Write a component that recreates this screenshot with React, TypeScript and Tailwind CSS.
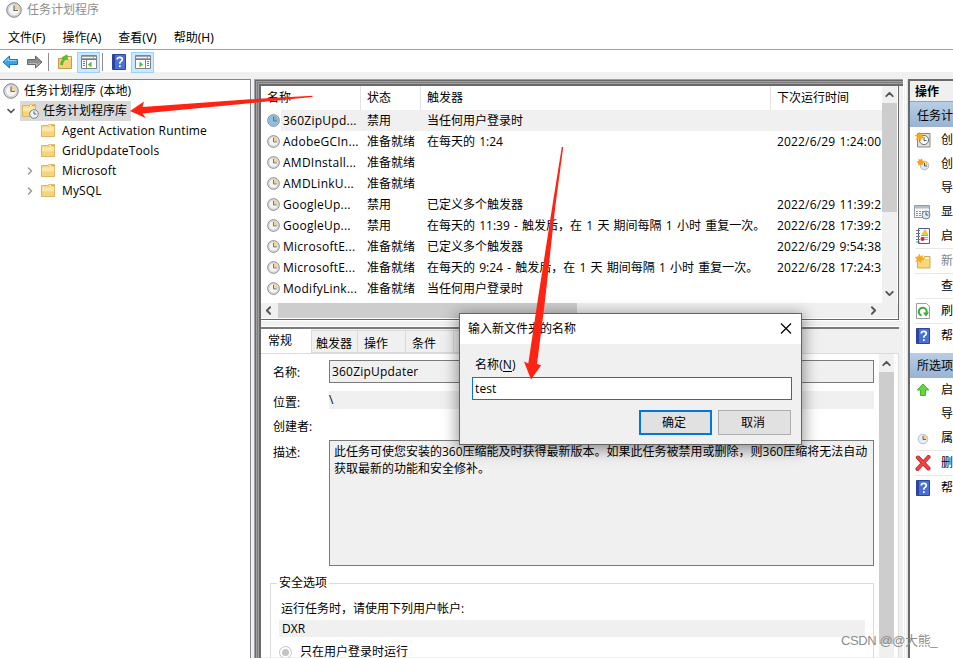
import type { ReactNode } from "react";
import { ChevronDown, ChevronLeft, ChevronRight, ChevronUp } from "lucide-react";
import clsx from "clsx";

type Task = { name: string; state: string; trigger: string; next: string };

const tasks: Task[] = [
  { name: "360ZipUpd...", state: "禁用", trigger: "当任何用户登录时", next: "" },
  { name: "AdobeGCIn...", state: "准备就绪", trigger: "在每天的 1:24", next: "2022/6/29 1:24:00" },
  { name: "AMDInstall...", state: "准备就绪", trigger: "", next: "" },
  { name: "AMDLinkU...", state: "准备就绪", trigger: "", next: "" },
  { name: "GoogleUp...", state: "禁用", trigger: "已定义多个触发器", next: "2022/6/29 11:39:2" },
  { name: "GoogleUp...", state: "禁用", trigger: "在每天的 11:39 - 触发后，在 1 天 期间每隔 1 小时 重复一次。", next: "2022/6/28 17:39:2" },
  { name: "MicrosoftE...", state: "准备就绪", trigger: "已定义多个触发器", next: "2022/6/29 9:54:38" },
  { name: "MicrosoftE...", state: "准备就绪", trigger: "在每天的 9:24 - 触发后，在 1 天 期间每隔 1 小时 重复一次。", next: "2022/6/28 17:24:3" },
  { name: "ModifyLink...", state: "准备就绪", trigger: "当任何用户登录时", next: "" },
];

const Clock = ({ size, blue = false }: { size: number; blue?: boolean }) => (
  <svg width={size} height={size} viewBox="0 0 16 16" className="shrink-0">
    <circle cx="8" cy="8" r="7.3" fill={blue ? "#a9cbe4" : "#d3d5d7"} stroke={blue ? "#5f8dab" : "#85878a"} />
    <circle cx="8" cy="8" r="5.5" fill={blue ? "#94bfdf" : "#f3f4f5"} stroke={blue ? "#7ba8c7" : "#c9cccf"} strokeWidth="0.6" />
    <path d="M8 8V2.6A5.4 5.4 0 0 1 13.4 8z" fill={blue ? "#8eb0b4" : "#f2d595"} />
    <path d="M8 3.5V8.5H12" fill="none" stroke={blue ? "#4c7592" : "#6c727a"} strokeWidth="1.2" />
  </svg>
);

// small clock used for the properties action
const PropertiesClock = () => (
  <svg width="12" height="12" viewBox="0 0 12 12" className="mt-0.5">
    <circle cx="6" cy="6" r="4.8" fill="#e6eef5" stroke="#b3c0cc" />
    <path d="M6 6V1.8A4.2 4.2 0 0 1 10.2 6z" fill="#f5cf87" />
    <path d="M6 3v3.5h3" fill="none" stroke="#56697c" />
  </svg>
);

const Folder = ({ clock = false }: { clock?: boolean }) => (
  <svg width="17" height="16" viewBox="0 0 17 16" className="shrink-0">
    <path d="M.5 2.5H7l1-1h5.500v12H.5z" fill="#f6d98c" stroke="#dcb660" />
    <path d="M7.5 1.5H13v2H7.5z" fill="#fff6da" stroke="#dcb660" strokeWidth=".6" />
    <path d="M10 2h3v1h-3z" fill="#8fb4d9" />
    <path d="M1 4.5h6.500l1-1H13v5H1z" fill="#fce7a8" />
    <path d="M1 8.5h12V13H1z" fill="#f5d47c" />
    {clock && (
      <>
        <circle cx="12" cy="11" r="4.3" fill="#edf3f8" stroke="#77818a" />
        <path d="M12 8.3V11h2.3" fill="none" stroke="#4e6070" />
      </>
    )}
  </svg>
);

const Help = () => (
  <svg width="14" height="16" viewBox="0 0 14 16" className="shrink-0">
    <path d="M.5.5h13v15H.5z" fill="#4a70d6" stroke="#2b449c" />
    <path d="M1 1h2v14H1z" fill="#2a449f" />
    <path d="M5.2 5.5Q5.3 3.3 7.8 3.3T10.3 5.4Q10.3 6.6 9 7.4T7.8 9.7" fill="none" stroke="#fff" strokeWidth="1.7" />
    <path d="M7 11.2h1.7V13H7z" fill="#fff" />
  </svg>
);

const BlueArrow = ({ right = false }: { right?: boolean }) => (
  <svg width="17" height="14" viewBox="0 0 17 14" className={clsx("shrink-0", right && "rotate-180")}>
    <path d="M1 7l6.5-6v3.5h8v5h-8V13z" fill={right ? "#8e8e8e" : "#37a5e8"} stroke={right ? "#686868" : "#1976b8"} strokeLinejoin="round" />
    <path d="M3 6.5l3.5-3v2h8" fill="none" stroke={right ? "#b9b9b9" : "#8ed6fa"} />
  </svg>
);

const PaneIcon = ({ right = false }: { right?: boolean }) => (
  <svg width="16" height="14" viewBox="0 0 16 14" className="shrink-0">
    <path d="M.5.5h15v13H.5z" fill="#fff" stroke="#81858a" />
    <path d="M1 1h14v3H1z" fill="#a1a5aa" />
    <path d="M1 2.5h11" stroke="#eef0f2" />
    <path d="M13 2.5h2" stroke="#fff" />
    <path d="M1 4.5h14" stroke="#777b80" />
    <path d={right ? "M10.5 5v8.5" : "M5.5 5v8.5"} stroke="#81858a" />
    <path d={right ? "M12 6.5h2M12 8.5h2M12 10.5h2" : "M2 6.5h2M2 8.5h2M2 10.5h2"} stroke="#647fa8" />
    <path d={right ? "M4.5 6.5L8 9.5l-3.5 3z" : "M10.5 6.5L7 9.5l3.5 3z"} fill="#4eb832" />
  </svg>
);

const UpFolder = () => (
  <svg width="15" height="16" viewBox="0 0 15 16">
    <path d="M.5 4.5H6l1.5-2h6v12H.5z" fill="#f5d27a" stroke="#c69a43" />
    <path d="M9 3h4v2H9z" fill="#f8e7b6" />
    <path d="M2.5 10.5c.3-3 1.5-5 3-5.500L4 3.500 9 .8 9.500 6 8 5C6 6 5 8 4.500 11z" fill="#53c52c" stroke="#3b9b22" strokeWidth=".5" />
  </svg>
);

const Spark = () => (
  <path d="M4.5 0l1 2.7L8 1.5 7 4l2.2 1.5-2.6.8L5.5 9 4 6.5 1 7.8 2.3 5 0 3.2l3-.4z" fill="#f7a91c" stroke="#f7a91c" strokeWidth=".5" />
);

const NewClock = ({ boxed = false }: { boxed?: boolean }) => (
  <svg width="16" height="16" viewBox="0 0 16 16">
    {boxed ? (
      <>
        <path d="M2.5 1.5H15V15H2.5z" fill="#e4e1dd" stroke="#8d8680" />
        <circle cx="9" cy="8" r="4.6" fill="#f5f7f9" stroke="#6e747b" />
        <path d="M9 5v3.5h2.5" fill="none" stroke="#486078" />
        <Spark />
      </>
    ) : (
      <>
        <circle cx="9.5" cy="9.5" r="4.3" fill="#dfe9f1" stroke="#a3b6c4" />
        <path d="M9.5 9.5V5.5a4 4 0 0 1 4 4z" fill="#f5cf87" />
        <path d="M9.5 7v3H12" fill="none" stroke="#486078" />
        <path d="M3.5 2.5l1.5 1.2L7 2.5l.5 2L10 6 8 7.200 7.200 9.500 5 8.500l-2 1 .3-2.300-1.800-1.500 2-.7z" fill="#f7a01c" />
      </>
    )}
  </svg>
);

const RunningTasks = () => (
  <svg width="17" height="15" viewBox="0 0 17 15">
    <path d="M.5.5h15v12H.5z" fill="#f8f9fa" stroke="#949da5" />
    <path d="M1 1h14v2.5H1z" fill="#b5bec6" />
    <path d="M2 6.5h8M2 8.5h6M2 10.5h5" stroke="#8296a8" strokeDasharray="2 1" />
    <circle cx="12" cy="10" r="4" fill="#dceaf1" stroke="#75848e" />
    <path d="M12 7.2V10h2.5" fill="none" stroke="#455e6e" />
  </svg>
);

const History = () => (
  <svg width="14" height="16" viewBox="0 0 14 16">
    <path d="M2.5.5h11v15h-11z" fill="#f8fbff" stroke="#4a6085" />
    <path d="M0 2.5h4M0 5.5h4M0 8.5h4M0 11.5h4M0 14h4" stroke="#777" />
    <path d="M5 7.5h7M5 9.5h7M8 11.5h4" stroke="#8badd5" />
    <path d="M9 1.5l3 5H6z" fill="#f6cb20" stroke="#cf9c12" strokeWidth=".4" />
    <circle cx="6.5" cy="11" r="2" fill="#d92b2b" />
  </svg>
);

const NewFolder = () => (
  <svg width="16" height="15" viewBox="0 0 16 15">
    <path d="M2.5 4.5h6l1-2H15V14H2.5z" fill="#f8d77f" stroke="#d5ab51" />
    <path d="M10 3h4v2h-4z" fill="#fff1c6" />
    <Spark />
  </svg>
);

const Refresh = () => (
  <svg width="14" height="16" viewBox="0 0 14 16">
    <path d="M.5.5h10l3 3v12H.5z" fill="#fff" stroke="#9aa0a6" />
    <path d="M5.5 12.5A4 4 0 1 1 10.5 10" fill="none" stroke="#35ae35" strokeWidth="2" />
    <path d="M7 9.5h6l-3 4z" fill="#35ae35" />
  </svg>
);

const RunArrow = () => (
  <svg width="14" height="14" viewBox="0 0 14 14">
    <path d="M7 1l5.8 6H9.5v5.5h-5V7H1.2z" fill="#63d63b" stroke="#4cb034" strokeLinejoin="round" />
  </svg>
);

const DeleteCross = () => (
  <svg width="16" height="16" viewBox="0 0 16 16">
    <path d="M3 2.5l10.5 11M13.5 2l-11 12" stroke="#b91f23" strokeWidth="4" strokeLinecap="round" />
    <path d="M3 2.5l10.5 11M13.5 2l-11 12" stroke="#ee4247" strokeWidth="2.6" strokeLinecap="round" />
  </svg>
);

const Separator = () => <div className="ml-[5px] h-px bg-[#e8e8e8]" />;

const ActionRow = ({ icon, text, muted = false }: { icon?: ReactNode; text: string; muted?: boolean }) => (
  <div className={clsx("flex h-6 items-center pl-1", muted && "text-[#838383]")}>
    <span className="mr-2.5 flex w-[17px] shrink-0 justify-center">{icon}</span>
    <span className="whitespace-nowrap">{text}</span>
  </div>
);

const TreeItem = ({ text, expandable = false }: { text: string; expandable?: boolean }) => (
  <div className="flex h-5 items-center pl-6">
    <span className="w-4">{expandable && <ChevronRight size={12} className="text-[#9a9a9a]" strokeWidth={3} />}</span>
    <span className="-mt-px ml-px"><Folder /></span>
    <span className="ml-1 tracking-[0.16px]">{text}</span>
  </div>
);

const TaskRow = ({ task, selected }: { task: Task; selected: boolean }) => (
  <div className="flex h-[21px] items-center pl-1.5">
    <Clock size={13} blue={selected} />
    <div className={clsx("ml-px flex h-full flex-1 items-center", selected && "bg-[#f0f0f0]")}>
      <span className="w-[86px] shrink-0 pl-[2px] tracking-[0.25px]">{task.name}</span>
      <span className="w-[60px] shrink-0">{task.state}</span>
      <span className="w-[350px] shrink-0 [word-spacing:1.1px]">{task.trigger}</span>
      <span className="w-[105px] shrink-0 tracking-[0.16px] whitespace-nowrap [word-spacing:0.9px]">{task.next}</span>
    </div>
  </div>
);

const TaskList = () => (
  <div className="flex h-[234px] w-[638px] flex-col border-r border-b border-[#696969] bg-white">
    <div className="flex h-[217px]">
      <div className="w-[621px] overflow-hidden">
        <div className="flex h-6 items-center">
          <div className="flex h-full w-[100px] items-center border-r border-[#e2e2e2] pl-1.5">名称</div>
          <div className="flex h-full w-[60px] items-center border-r border-[#e2e2e2] pl-1.5">状态</div>
          <div className="flex h-full w-[350px] items-center border-r border-[#e2e2e2] pl-1.5">触发器</div>
          <div className="pl-1.5">下次运行时间</div>
        </div>
        {tasks.map((task, i) => (
          <TaskRow key={i} task={task} selected={i === 0} />
        ))}
      </div>
      <div className="flex w-[15px] flex-col items-center bg-[#f0f0f0] text-[#555]">
        <ChevronUp size={13} strokeWidth={3.5} className="my-0.5" />
        <div className="h-[109px] w-full bg-[#cdcdcd]" />
        <ChevronDown size={13} strokeWidth={3.5} className="mt-auto mb-[3px]" />
      </div>
    </div>
    <div className="flex h-[15px] items-center bg-[#f0f0f0] text-[#555]">
      <ChevronLeft size={13} strokeWidth={3.5} className="ml-px mr-[3px]" />
      <div className="h-full w-[299px] bg-[#cdcdcd]" />
      <ChevronRight size={13} strokeWidth={3.5} className="mr-[18px] ml-auto" />
    </div>
  </div>
);

const TaskDetails = () => (
  <div className="flex h-[330px] w-[638px] flex-col border-t-2 border-[#7b7b7b] bg-[#f0f0f0]">
    <div className="flex h-6 shrink-0 items-end">
      <div className="flex h-full w-[50px] items-center bg-white pl-[7px]">常规</div>
      {["触发器", "操作", "条件", ""].map((tab, i) => (
        <div
          key={i}
          className={clsx(
            "flex h-[23px] items-center border-t border-l border-b border-[#d9d9d9] pt-1",
            i === 0 ? "w-[46px] pl-1" : "w-12 pl-1.5"
          )}
        >
          {tab}
        </div>
      ))}
    </div>
    <div className="flex min-h-0 flex-1 border-t border-r border-[#dcdcdc] bg-white">
      <div className="w-[617px] shrink-0 pl-3">
        <div className="mt-1.5 flex h-[23px] items-center">
          <span className="w-14 pt-0.5">名称:</span>
          <div className="flex h-[23px] w-[545px] items-center border border-[#7a7a7a] bg-[#f0f0f0] pl-[2px] tracking-[0.2px]">360ZipUpdater</div>
        </div>
        <div className="mt-2 flex h-[18px] items-center">
          <span className="w-14 pt-1.5">位置:</span>
          <div className="flex h-full w-[545px] items-center bg-[#f0f0f0]">\</div>
        </div>
        <div className="mt-[9px] flex h-[18px] items-center">创建者:</div>
        <div className="mt-1 flex h-[126px]">
          <span className="w-14 pt-1">描述:</span>
          <div className="w-[545px] border border-[#7a7a7a] bg-[#f0f0f0] pt-[2px] pl-1 leading-[17px]">
            <div className="whitespace-nowrap">此任务可使您安装的360压缩能及时获得最新版本。如果此任务被禁用或删除，则360压缩将无法自动</div>
            <div>获取最新的功能和安全修补。</div>
          </div>
        </div>
        <fieldset className="mt-2 -ml-[3px] h-[100px] w-[604px] border border-[#dcdcdc] pl-2">
          <legend className="-ml-0.5 h-[18px] px-0.5 leading-[18px]">安全选项</legend>
          <div className="mt-2 flex h-[18px] items-center pl-[2px]">运行任务时，请使用下列用户帐户:</div>
          <div className="mt-[2px] flex h-[17px] w-[586px] items-center bg-[#f0f0f0] pl-[3px]">DXR</div>
          <div className="mt-[6px] flex h-[18px] items-center">
            <span className="flex size-[13px] items-center justify-center rounded-full border border-[#c4c4c4]">
              <span className="size-[7px] rounded-full bg-[#c4c4c4]" />
            </span>
            <span className="ml-2">只在用户登录时运行</span>
          </div>
        </fieldset>
      </div>
      <div className="ml-px flex w-[15px] flex-col items-center bg-[#f0f0f0] text-[#555]">
        <ChevronUp size={13} strokeWidth={3.5} className="mt-[3px] mb-0.5 shrink-0" />
        <div className="h-[272px] w-full shrink-0 bg-[#cdcdcd]" />
      </div>
    </div>
  </div>
);

const NameDialog = () => (
  <div className="absolute top-[313px] left-[459px] h-[132px] w-[343px] border border-[#646464] bg-[#f0f0f0] shadow-[0_3px_14px_2px_rgba(0,0,0,0.4)]">
    <div className="flex h-[30px] items-center justify-between bg-white pr-[7px] pl-2">
      <span>输入新文件夹的名称</span>
      <svg width="16" height="16" viewBox="0 0 16 16" className="stroke-black">
        <path d="M3 2.5l10 10M13 2.5l-10 10" strokeWidth="1.2" />
      </svg>
    </div>
    <div className="mt-3 ml-[15px] h-[18px] leading-[18px] tracking-[0.1px]">
      名称(<span className="underline underline-offset-2">N</span>)
    </div>
    <div className="mt-[3px] ml-3 flex h-[23px] w-[320px] items-center border border-[#0078d7] bg-white pl-[2px] tracking-[0.1px]">test</div>
    <div className="mt-2.5 mr-2.5 flex justify-end gap-1.5">
      <div className="flex h-[25px] w-[73px] items-center justify-center border-2 border-[#0078d7] bg-[#e1e1e1] pr-[3px]">确定</div>
      <div className="flex h-[25px] w-[73px] items-center justify-center border border-[#adadad] bg-[#e1e1e1] pr-[3px]">取消</div>
    </div>
  </div>
);

const App = () => (
  <div className="relative flex h-[658px] w-[953px] flex-col overflow-hidden bg-[#f0f0f0] font-['Open_Sans','Noto_Sans_CJK_SC',sans-serif] text-[12px] leading-[18px] text-black">
    <header className="h-[72px] bg-white">
      <div className="flex h-[27px] items-center pl-1.5 pb-[7px] text-[#8e8e8e]">
        <Clock size={16} />
        <span className="ml-[5px]">任务计划程序</span>
      </div>
      <nav className="flex h-[22px] items-center gap-[17px] pl-2 font-['Noto_Sans','Noto_Sans_CJK_SC',sans-serif]">
        <span>文件(F)</span>
        <span>操作(A)</span>
        <span>查看(V)</span>
        <span>帮助(H)</span>
      </nav>
      <div className="flex h-[23px] items-center border-t border-[#a0a0a0] pt-0.5 pl-[2px]">
        <BlueArrow />
        <span className="ml-[7px]"><BlueArrow right /></span>
        <span className="mx-[5px] h-[18px] w-px bg-[#8d8d8d]" />
        <span className="ml-[4px] flex w-[15px]"><UpFolder /></span>
        <span className="ml-[4px] flex h-[21px] w-[23px] items-center justify-center border border-[#99d1ff] bg-[#cce8ff]"><PaneIcon /></span>
        <span className="ml-[2px] h-[18px] w-px bg-[#8d8d8d]" />
        <span className="ml-[9px]"><Help /></span>
        <span className="ml-[5px] flex h-[21px] w-[23px] items-center justify-center border border-[#99d1ff] bg-[#cce8ff]"><PaneIcon right /></span>
      </div>
    </header>

    <main className="mt-[7px] flex h-[579px]">
      <aside className="w-[251px] shrink-0 border-t border-r border-[#828790] bg-white pt-px">
        <div className="flex h-5 items-center pl-[3px]">
          <Clock size={16} />
          <span className="ml-[5px] [word-spacing:0.9px]">任务计划程序 (本地)</span>
        </div>
        <div className="flex h-5 items-center pl-[5px]">
          <ChevronDown size={12} strokeWidth={3.5} className="text-[#555]" />
          <div className="ml-[3px] flex h-5 w-[111px] items-center bg-[#d9d9d9] pl-0.5">
            <Folder clock />
            <span className="ml-1">任务计划程序库</span>
          </div>
        </div>
        <TreeItem text="Agent Activation Runtime" />
        <TreeItem text="GridUpdateTools" />
        <TreeItem text="Microsoft" expandable />
        <TreeItem text="MySQL" expandable />
      </aside>

      {/* ridged frame around the list and the details */}
      <section className="ml-[3px] w-[649px] shrink-0 pt-[7px] pl-[7px] shadow-[inset_1px_1px_0_#a0a0a0,inset_2px_2px_0_#696969,inset_3px_3px_0_#a0a0a0,inset_4px_4px_0_#7c7c7c,inset_5px_5px_0_#a0a0a0,inset_6px_6px_0_#696969,inset_7px_7px_0_#696969]">
        <TaskList />
        <div className="h-[7px] border-t border-b border-white bg-[#f0f0f0]" />
        <TaskDetails />
      </section>

      <div className="flex w-[5px] justify-between">
        <span className="w-px bg-white" />
        <span className="w-px bg-white" />
        <span className="w-px bg-[#e3e3e3]" />
      </div>

      <aside className="flex-1 overflow-hidden border-t-2 border-l-2 border-[#696969] bg-white">
        <div className="flex h-[21px] items-center border-b border-[#a0a0a0] bg-[#f0f0f0] pt-px pl-[5px] font-bold">操作</div>
        <div className="mb-px flex h-[25px] items-center bg-linear-to-b from-[#b7cee6] to-[#99b4d1] pt-0.5 pl-[7px] whitespace-nowrap">任务计</div>
        <ActionRow icon={<NewClock boxed />} text="创" />
        <ActionRow icon={<NewClock />} text="创" />
        <ActionRow text="导" />
        <ActionRow icon={<RunningTasks />} text="显" />
        <ActionRow icon={<History />} text="启" />
        <Separator />
        <ActionRow icon={<NewFolder />} text="新" muted />
        <Separator />
        <ActionRow text="查" />
        <Separator />
        <ActionRow icon={<Refresh />} text="刷" />
        <Separator />
        <ActionRow icon={<Help />} text="帮" />
        <div className="mt-[5px] flex h-[25px] items-center bg-linear-to-b from-[#b7cee6] to-[#99b4d1] pl-[7px] whitespace-nowrap">所选项</div>
        <ActionRow icon={<RunArrow />} text="启" />
        <ActionRow text="导" />
        <ActionRow icon={<PropertiesClock />} text="属" />
        <Separator />
        <ActionRow icon={<DeleteCross />} text="删" />
        <Separator />
        <ActionRow icon={<Help />} text="帮" />
      </aside>
    </main>

    <NameDialog />

    {/* annotation arrows */}
    <svg width="953" height="658" className="pointer-events-none absolute inset-0" fill="#ff2314">
      <path d="M130 111l14-9.5-1.5 5.5L250 99.3l62.5-3.6v1.2L250 103.2l-107.500 10.300 3.500 4.800z" />
      <path d="M561.8 147h1.4L555.5 205l-11 100L537 364l4.2 1.2L531 379.5l-7-18 4.300 2L537 305l15.5-100z" />
    </svg>
    <span className="absolute top-[632px] left-[841px] font-['Liberation_Sans','Noto_Sans_CJK_SC',sans-serif] text-[13px] tracking-[-0.4px] whitespace-nowrap text-[#8c8c8c]">
      CSDN @@大熊_
    </span>
  </div>
);

export default App;
